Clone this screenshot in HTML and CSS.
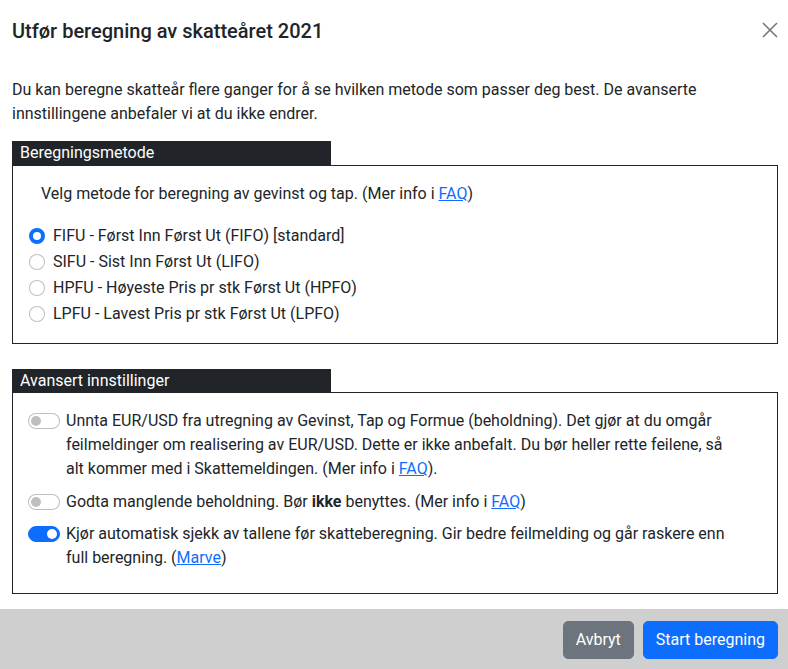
FILE: index.html
```html
<!DOCTYPE html>
<html lang="no">
<head>
<meta charset="utf-8">
<title>Utfør beregning</title>
<link rel="stylesheet" href="styles.css">
</head>
<body>
<div class="modal">
  <div class="modal-header">
    <h5 class="modal-title">Utfør beregning av skatteåret 2021</h5>
    <button class="btn-close" type="button" aria-label="Lukk">
      <svg width="16" height="16" viewBox="0 0 16 16"><path d="M1 1L15 15M15 1L1 15" stroke="#777" stroke-width="1.6" fill="none"/></svg>
    </button>
  </div>
  <div class="modal-body">
    <p class="intro">Du kan beregne skatteår flere ganger for å se hvilken metode som passer deg best. De avanserte innstillingene anbefaler vi at du ikke endrer.</p>

    <div class="legend">Beregningsmetode</div>
    <div class="box box-first">
      <p class="lead-text">Velg metode for beregning av gevinst og tap. (Mer info i <a href="#">FAQ</a>)</p>
      <label class="check"><span class="radio checked"></span><span>FIFU - Først Inn Først Ut (FIFO) [standard]</span></label>
      <label class="check"><span class="radio"></span><span>SIFU - Sist Inn Først Ut (LIFO)</span></label>
      <label class="check"><span class="radio"></span><span>HPFU - Høyeste Pris pr stk Først Ut (HPFO)</span></label>
      <label class="check"><span class="radio"></span><span>LPFU - Lavest Pris pr stk Først Ut (LPFO)</span></label>
    </div>

    <div class="legend legend-second">Avansert innstillinger</div>
    <div class="box box-second">
      <label class="switch-row"><span class="switch"></span><span class="switch-text">Unnta EUR/USD fra utregning av Gevinst, Tap og Formue (beholdning). Det gjør at du omgår feilmeldinger om realisering av EUR/USD. Dette er ikke anbefalt. Du bør heller rette feilene, så alt kommer med i Skattemeldingen. (Mer info i <a href="#">FAQ</a>).</span></label>
      <label class="switch-row"><span class="switch"></span><span class="switch-text">Godta manglende beholdning. Bør <b>ikke</b> benyttes. (Mer info i <a href="#">FAQ</a>)</span></label>
      <label class="switch-row"><span class="switch on"></span><span class="switch-text">Kjør automatisk sjekk av tallene før skatteberegning. Gir bedre feilmelding og går raskere enn full beregning. (<a href="#">Marve</a>)</span></label>
    </div>
  </div>
  <div class="modal-footer">
    <button class="btn btn-secondary" type="button">Avbryt</button>
    <button class="btn btn-primary" type="button">Start beregning</button>
  </div>
</div>
</body>
</html>
```
FILE: styles.css
```css
html, body {
  margin: 0;
  padding: 0;
  background: #fff;
}
body {
  font-family: Roboto, "Open Sans", Arial, sans-serif;
  font-size: 16px;
  line-height: 24px;
  color: #212529;
}
a {
  color: #0d6efd;
  text-decoration: underline;
}
.modal {
  display: flex;
  flex-direction: column;
  min-height: 669px;
}
.modal-header {
  display: flex;
  align-items: center;
  justify-content: space-between;
  padding: 16px 10px 16px 12px;
}
.modal-title {
  margin: 0;
  font-size: 20px;
  font-weight: 500;
  line-height: 30px;
}
.btn-close {
  background: none;
  border: 0;
  padding: 0;
  width: 16px;
  height: 16px;
  margin-top: -3px;
  display: flex;
  cursor: pointer;
}
.modal-body {
  padding: 16px 10px 15px 12px;
}
.intro {
  margin: 0 0 15px;
}
.legend {
  width: 319px;
  height: 24px;
  box-sizing: border-box;
  padding: 0 8px;
  background: #212529;
  color: #fff;
  line-height: 24px;
}
.box {
  border: 1px solid #212529;
  padding: 16px 16px 15px;
}
.box-first {
  margin-bottom: 25px;
}
.legend-second {
  height: 23px;
  line-height: 23px;
}
.lead-text {
  margin: 0 0 18px;
  padding-left: 12px;
}
.check {
  display: flex;
  align-items: flex-start;
  margin-bottom: 2px;
}
.radio {
  flex: none;
  width: 16px;
  height: 16px;
  box-sizing: border-box;
  margin: 4px 8px 0 0;
  border-radius: 50%;
  border: 1px solid rgba(0, 0, 0, 0.25);
  background: #fff;
}
.radio.checked {
  border: 4px solid #0d6efd;
  background: #fff;
}
.switch-row {
  display: flex;
  align-items: flex-start;
  margin-bottom: 8px;
}
.switch-row:first-child {
  margin-bottom: 9px;
}
.switch-text {
  padding-right: 20px;
}
.switch {
  flex: none;
  position: relative;
  width: 32px;
  height: 16px;
  box-sizing: border-box;
  margin: 4px 6px 0 -1px;
  border-radius: 8px;
  border: 1px solid rgba(0, 0, 0, 0.25);
  background: #fff;
}
.switch::after {
  content: "";
  position: absolute;
  left: 2px;
  top: 2px;
  width: 10px;
  height: 10px;
  border-radius: 50%;
  background: rgba(0, 0, 0, 0.25);
}
.switch.on {
  background: #0d6efd;
  border-color: #0d6efd;
}
.switch.on::after {
  left: auto;
  right: 2px;
  background: #fff;
}
.modal-footer {
  margin-top: auto;
  display: flex;
  justify-content: flex-end;
  gap: 9px;
  padding: 12px 10px 12px 12px;
  background: #cfcfcf;
}
.btn {
  font-family: inherit;
  font-size: 16px;
  line-height: 24px;
  padding: 6px 12px;
  border: 1px solid transparent;
  border-radius: 5px;
  color: #fff;
  cursor: pointer;
}
.btn-secondary {
  background: #6c757d;
  border-color: #6c757d;
}
.btn-primary {
  background: #0d6efd;
  border-color: #0d6efd;
}
```
